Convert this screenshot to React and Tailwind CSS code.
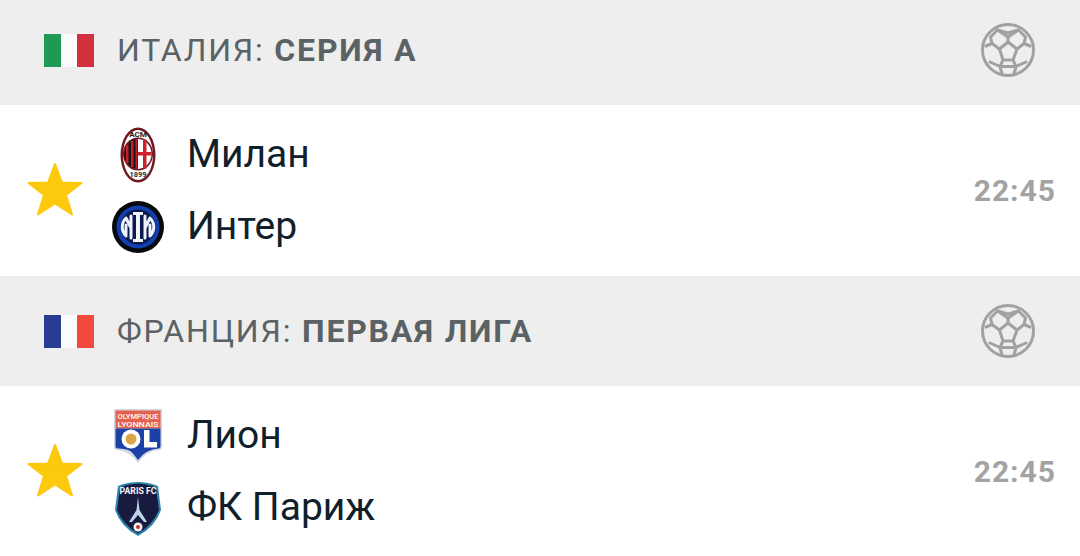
const ITALY = ['bg-[#1f9a55]', 'bg-[#fbfbfb]', 'bg-[#d32f3c]'];
const FRANCE = ['bg-[#283c94]', 'bg-[#fbfbfb]', 'bg-[#f2493f]'];

function Flag({ colors }) {
  return (
    <div className="flex h-[33px] w-[50px] shrink-0">
      {colors.map((c) => (
        <div key={c} className={`flex-1 ${c}`} />
      ))}
    </div>
  );
}

function Ball() {
  return (
    <svg width="56" height="56" viewBox="0 0 56 56" fill="none" stroke="#a1a1a1" strokeWidth="3" strokeLinejoin="round" strokeLinecap="round">
      <circle cx="28" cy="28" r="25.500" />
      <path d="M28 20 L37 27 L33 38 L23 38 L19.500 27 Z" />
      <path d="M28 20 L28 15 M37 27 L44 21.500 M19.500 27 L12 21.500 M33 38 L36 44.500 M23 38 L20 44.500" />
      <path d="M28 15 L17.500 8 L10.500 15 L12 21.500 L6 24" />
      <path d="M28 15 L38.500 8 L45.500 15 L44 21.500 L50 24" />
      <path d="M17.500 8 L28 11 L38.500 8" />
      <path d="M20 44.500 L36 44.500 M20 44.500 L10 40 M36 44.500 L46 40 M20 44.500 L22 52 M36 44.500 L34 52" />
    </svg>
  );
}

function Star() {
  return (
    <svg width="58" height="58" viewBox="0 0 58 58" className="-mt-[2px] shrink-0">
      <path
        d="M29 3 L36 21.500 L55.500 22 L40 34 L46 53.500 L29 42.500 L12 53.500 L18 34 L2.500 22 L22 21.500 Z"
        fill="#fdc90c"
        stroke="#fdc90c"
        strokeWidth="2"
        strokeLinejoin="round"
      />
    </svg>
  );
}

function MilanLogo() {
  return (
    <svg width="36" height="56" viewBox="0 0 36 56">
      <ellipse cx="18" cy="28" rx="17.500" ry="27.500" fill="#6f1a20" />
      <ellipse cx="18" cy="28" rx="15" ry="25" fill="#fff" />
      <ellipse cx="18" cy="27" rx="15" ry="16.500" fill="#6f1a20" />
      <ellipse cx="18" cy="27" rx="13.500" ry="15" fill="#151515" />
      <path d="M6 18h2.500v18H6zM11 14h2.500v26H11zM15.500 12h2v30h-2z" fill="#c81e2b" />
      <path d="M18 12a13.500 15 0 0 1 13.500 15A13.500 15 0 0 1 18 42z" fill="#fff" />
      <path d="M23 12.500h3.500v29H23zM18 25h13.500v3.500H18z" fill="#cf2231" />
      <text x="18" y="10" textAnchor="middle" fontFamily="Roboto" fontWeight="700" fontSize="8" fill="#222">ACM</text>
      <text x="18" y="50" textAnchor="middle" fontFamily="Roboto" fontWeight="700" fontSize="7.500" fill="#333">1899</text>
    </svg>
  );
}

function InterLogo() {
  return (
    <svg width="52" height="52" viewBox="0 0 52 52">
      <circle cx="26" cy="26" r="26" fill="#08090f" />
      <circle cx="26" cy="26" r="21.500" fill="#123fae" />
      <circle cx="26" cy="26" r="17.500" fill="#0b1a4d" />
      <path d="M21 11h10v3h-3v24h3v3H21v-3h3V14h-3z" fill="#f2f4fb" />
      <path d="M19 15v22M14 17c-5 5-5 13 0 18M14 17l5 10M14 35V24" fill="none" stroke="#eef2fc" strokeWidth="3" strokeLinecap="round" />
      <path d="M33 15v22M38 17c5 5 5 13 0 18M38 17l-5 10M38 35V24" fill="none" stroke="#eef2fc" strokeWidth="3" strokeLinecap="round" />
    </svg>
  );
}

function LyonLogo() {
  return (
    <svg width="48" height="54" viewBox="0 0 48 54">
      <path d="M0 0h48v38q0 3-3 3-13 1-21 13-8-12-21-13-3 0-3-3z" fill="#d3d7e3" />
      <path d="M1.500 1.500h45v18h-45z" fill="#e4604f" />
      <text x="24" y="9.500" textAnchor="middle" fontFamily="Roboto" fontWeight="500" fontSize="7.500" fill="#fff" textLength="41" lengthAdjust="spacingAndGlyphs">OLYMPIQUE</text>
      <text x="24" y="17.500" textAnchor="middle" fontFamily="Roboto" fontWeight="500" fontSize="7.500" fill="#fff" textLength="41" lengthAdjust="spacingAndGlyphs">LYONNAIS</text>
      <path d="M1.500 19.500h45v18q0 2-2 2-13 1-20.500 11.500C16.500 40.500 16 40.500 3.500 39.500q-2 0-2-2z" fill="#1b41a6" />
      <circle cx="17" cy="30" r="9.500" fill="#fff" />
      <circle cx="17" cy="30" r="5.500" fill="#dca54a" />
      <path d="M30 21h5.500v12H43v5.500H30z" fill="#fff" />
    </svg>
  );
}

function ParisLogo() {
  return (
    <svg width="46" height="56" viewBox="0 0 46 56">
      <path d="M3 6Q23-2 43 6L46 30Q40 47 23 56 6 47 0 30z" fill="#2b86ad" />
      <path d="M5 7.500Q23 0 41 7.500L44 30Q38 45 23 53.500 8 45 2 30z" fill="#191a3f" />
      <text x="23" y="14" textAnchor="middle" fontFamily="Roboto" fontWeight="700" fontSize="9.500" fill="#f1f3f7" textLength="37" lengthAdjust="spacingAndGlyphs">PARIS FC</text>
      <path d="M23 17L24.500 30 32 42H29L23 35 17 42H14L21.500 30z" fill="#b9d6e6" />
      <circle cx="23" cy="47" r="4.500" fill="#f1f3f7" />
      <circle cx="23" cy="47" r="2" fill="#c0392b" />
    </svg>
  );
}

function LeagueHeader({ flag, country, league, height }) {
  return (
    <div className={`flex items-center justify-between bg-[#eeeeee] pl-[44px] pr-[44px] ${height}`}>
      <div className="flex items-center gap-[23px]">
        <Flag colors={flag} />
        <div className="text-[32px] leading-none tracking-[1.8px] text-[#5a6265]">
          {country}: <span className="font-bold">{league}</span>
        </div>
      </div>
      <Ball />
    </div>
  );
}

function Team({ logo, name }) {
  return (
    <div className="flex h-[72px] items-center">
      <div className="flex w-[56px] justify-center">{logo}</div>
      <div className="ml-[21px] text-[39px] leading-none text-[#10202b]">{name}</div>
    </div>
  );
}

function Match({ home, away, height }) {
  return (
    <div className={`flex items-start bg-white pl-[26px] pr-[24px] ${height}`}>
      <div className="flex h-[171px] w-full items-center">
        <Star />
        <div className="ml-[26px] flex-1">
          <Team {...home} />
          <Team {...away} />
        </div>
        <div className="text-[30px] font-bold leading-none tracking-[1px] text-[#a3a3a3]">22:45</div>
      </div>
    </div>
  );
}

export default function App() {
  return (
    <div className="h-[556px] w-[1080px] overflow-hidden bg-white font-['Roboto',sans-serif]">
      <LeagueHeader flag={ITALY} country="ИТАЛИЯ" league="СЕРИЯ А" height="h-[105px] pb-[5px]" />
      <Match height="h-[171px]" home={{ logo: <MilanLogo />, name: 'Милан' }} away={{ logo: <InterLogo />, name: 'Интер' }} />
      <LeagueHeader flag={FRANCE} country="ФРАНЦИЯ" league="ПЕРВАЯ ЛИГА" height="h-[110px]" />
      <Match height="h-[170px]" home={{ logo: <LyonLogo />, name: 'Лион' }} away={{ logo: <ParisLogo />, name: 'ФК Париж' }} />
    </div>
  );
}
